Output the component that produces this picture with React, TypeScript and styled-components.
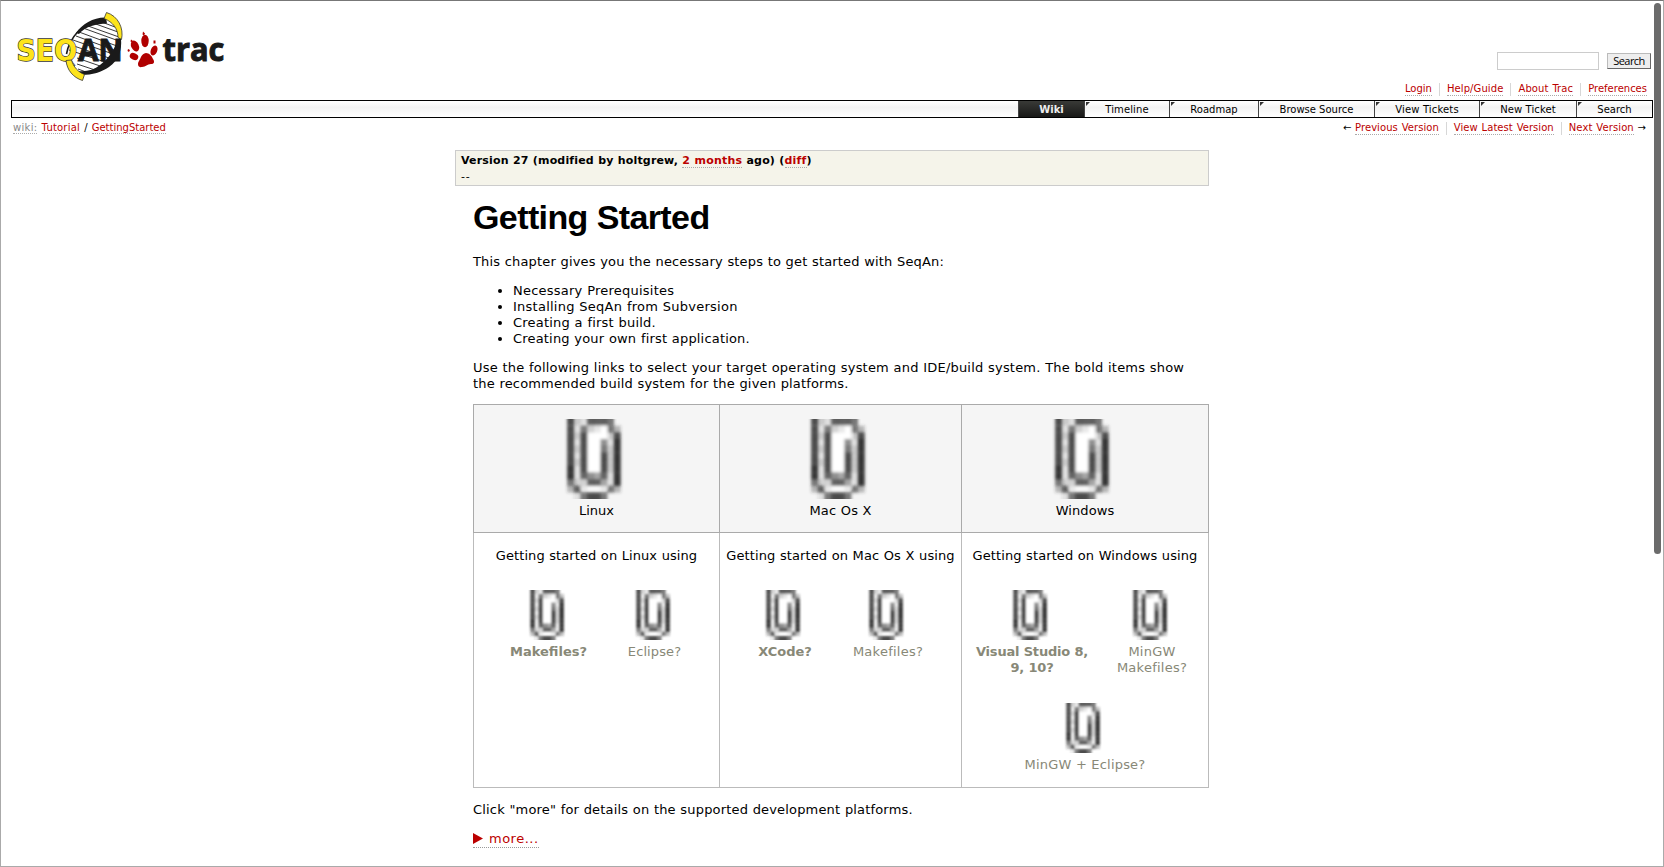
import React from 'react';
import styled, { createGlobalStyle } from 'styled-components';

const GlobalStyle = createGlobalStyle`
  * { box-sizing: border-box; }
  html, body { margin: 0; padding: 0; background: #fff; overflow: hidden; }
  body { font: 13px/16px Verdana, "DejaVu Sans", sans-serif; color: #000; }
`;

const Frame = styled.div`
  display: flex;
  justify-content: space-between;
  width: 1664px;
  height: 867px;
  border: 1px solid #aaa;
  border-top-color: #777;
  overflow: hidden;
`;
const Page = styled.div`
  display: flex;
  flex-direction: column;
  width: 1642px;
  margin-left: 10px;
`;
const ScrollTrack = styled.div`
  width: 9px;
  padding-top: 2px;
`;
const ScrollThumb = styled.div`
  width: 7px;
  height: 551px;
  border-radius: 3.5px;
  background: #6b6b6b;
`;

const Header = styled.header`
  display: flex;
  justify-content: space-between;
  height: 99px;
`;
const HeaderSide = styled.div`
  display: flex;
  flex-direction: column;
  align-items: flex-end;
  padding: 51px 2px 0 0;
`;
const SearchForm = styled.form`
  display: flex;
  align-items: center;
  gap: 8px;
  height: 18px;
`;
const SearchInput = styled.input`
  width: 102px;
  height: 18px;
  padding: 0 3px;
  border: 1px solid #ccc;
  background: #fff;
`;
const SearchButton = styled.button`
  width: 44px;
  height: 16px;
  padding: 0 0 1px;
  border: 1px solid #bbb;
  border-right-color: #666;
  border-bottom-color: #666;
  background: #eee;
  color: #000;
  font: 11px/13px "Open Sans", sans-serif;
  letter-spacing: -0.55px;
`;

const LinkBar = styled.div<{ $top?: number; $right?: number }>`
  display: flex;
  align-items: center;
  height: 12px;
  margin-top: ${(p) => p.$top ?? 0}px;
  margin-right: ${(p) => p.$right ?? 0}px;
  font-size: 10px;
  line-height: 12px;
`;
const BarItem = styled.span`
  display: flex;
  padding: 0 7px;
  white-space: pre;
  word-spacing: 0.6px;
  & + & { border-left: 1px solid #d7d7d7; }
  &:last-child { padding-right: 0; }
`;
const Link = styled.a<{ $ls?: number }>`
  color: #b00;
  border-bottom: 1px dotted #aaa;
  letter-spacing: ${(p) => p.$ls ?? 0}px;
  text-decoration: none;
`;
const Muted = styled(Link)`
  color: #888;
`;

const MainNav = styled.nav`
  display: flex;
  justify-content: flex-end;
  height: 18px;
  border: 1px solid #000;
  background: linear-gradient(#fff, #f3f3f3 40%, #fff);
  font-size: 10px;
  line-height: 18px;
`;
const Tab = styled.a<{ $w: number; $active?: boolean; $ls?: number }>`
  position: relative;
  width: ${(p) => p.$w}px;
  height: 16px;
  text-align: center;
  letter-spacing: ${(p) => p.$ls ?? 0}px;
  border-left: 1px solid #444;
  color: ${(p) => (p.$active ? '#eee' : '#000')};
  font-weight: ${(p) => (p.$active ? 700 : 400)};
  background: ${(p) => (p.$active ? 'linear-gradient(#393a37, #181817)' : 'transparent')};
  &::before {
    content: '';
    display: ${(p) => (p.$active ? 'none' : 'block')};
    position: absolute;
    left: 1px;
    top: 1px;
    border-top: 4px solid #333;
    border-right: 4px solid transparent;
  }
`;

const CrumbRow = styled.div`
  display: flex;
  justify-content: space-between;
  padding: 4px 7px 0 2px;
`;
const Crumbs = styled.div`
  font-size: 10px;
  line-height: 12px;
  white-space: pre;
  word-spacing: 1px;
`;

const Article = styled.main`
  width: 754px;
  margin: 16px 0 0 444px;
`;
const VersionBox = styled.div`
  height: 36px;
  padding: 2px 5px;
  border: 1px solid #ccc;
  background: #f5f4ea;
  font-size: 11px;
  line-height: 16px;
`;
const VersionTitle = styled.div`
  font-weight: 700;
  letter-spacing: 0.16px;
  word-spacing: 0.3px;
`;
const Content = styled.div`
  margin-left: 18px;
`;
const Title = styled.h1`
  margin: 11px 0 17px;
  font: 700 34px/40px "Liberation Sans", Arial, sans-serif;
  letter-spacing: -0.6px;
`;
const Para = styled.p<{ $mt?: number; $mb?: number }>`
  margin: ${(p) => p.$mt ?? 0}px 0 ${(p) => p.$mb ?? 13}px;
  white-space: pre;
`;
const Line = styled.span<{ $ls?: number }>`
  letter-spacing: ${(p) => p.$ls ?? 0}px;
  word-spacing: 0.3px;
`;
const List = styled.ul`
  margin: 0 0 13px;
  padding-left: 40px;
`;

const Platforms = styled.div`
  display: grid;
  grid-template-columns: 247px 242px 247px;
  grid-template-rows: 129px 255px;
  width: 736px;
`;
const HeadCell = styled.div`
  display: flex;
  flex-direction: column;
  align-items: center;
  padding-top: 14px;
  border: 1px solid #aaa;
  border-left-width: 0;
  background: #f5f5f5;
  &:first-child { border-left-width: 1px; }
`;
const BodyCell = styled.div<{ $first?: boolean }>`
  display: flex;
  flex-direction: column;
  align-items: center;
  padding-top: 15px;
  border: solid #bbb;
  border-width: 0 1px 1px ${(p) => (p.$first ? 1 : 0)}px;
`;
const HeadLabel = styled.div<{ $ls?: number }>`
  margin-top: 4px;
  letter-spacing: ${(p) => p.$ls ?? 0}px;
`;
const Choices = styled.div<{ $gap?: number; $top: number; $shift?: number }>`
  display: flex;
  justify-content: center;
  gap: ${(p) => p.$gap ?? 0}px;
  margin-top: ${(p) => p.$top}px;
  margin-left: ${(p) => p.$shift ?? 0}px;
`;
const Choice = styled.a<{ $bold?: boolean; $w: number; $ls?: number }>`
  display: flex;
  flex-direction: column;
  align-items: center;
  gap: 4px;
  width: ${(p) => p.$w}px;
  color: #887;
  font-weight: ${(p) => (p.$bold ? 700 : 400)};
  letter-spacing: ${(p) => p.$ls ?? 0}px;
  text-align: center;
  white-space: pre;
`;
const More = styled.a`
  display: inline-flex;
  align-items: flex-start;
  gap: 6px;
  height: 18px;
  margin-top: -1px;
  line-height: 18px;
  color: #b00;
  border-bottom: 1px dotted #999;
  letter-spacing: 0.5px;
`;
const MoreArrow = styled.svg`
  margin-top: 3px;
`;

/* Darkness of each pixel of the paperclip, 0 (clear) to 9 (darkest). */
const CLIP_CELLS = [
  [8, 2, 1, 7, 7, 7, 6, 0],
  [8, 1, 6, 2, 1, 0, 6, 3],
  [8, 2, 8, 0, 0, 0, 2, 8],
  [8, 1, 8, 0, 0, 5, 1, 9],
  [8, 2, 8, 0, 0, 6, 2, 9],
  [8, 1, 8, 0, 0, 8, 2, 9],
  [8, 2, 8, 0, 0, 8, 2, 9],
  [9, 1, 8, 0, 0, 8, 2, 9],
  [9, 1, 7, 5, 4, 7, 1, 9],
  [6, 2, 2, 7, 7, 4, 1, 9],
  [3, 7, 1, 0, 0, 1, 6, 3],
  [0, 1, 6, 8, 8, 6, 0, 0],
];

const ClipSvg = styled.svg`
  display: block;
  overflow: hidden;
`;

function Paperclip({ size }: { size: number }) {
  return (
    <ClipSvg width={size} height={size} viewBox="0 0 12 12">
      <defs>
        <filter id="soften" x="-10%" y="-10%" width="120%" height="120%">
          <feGaussianBlur stdDeviation="0.2" />
        </filter>
      </defs>
      <g filter="url(#soften)">
        <rect x="3.5" y="1" width="4" height="9.5" fill="#fff" />
        {CLIP_CELLS.map((row, y) =>
          row.map((v, x) =>
            v ? (
              <rect
                key={`${x}-${y}`}
                x={1.52 + x}
                y={y === 0 ? -1 : y}
                width="1.04"
                height={y === 0 || y === 11 ? 2 : 1.04}
                fill="#2a2a2a"
                fillOpacity={v / 9.6}
              />
            ) : null,
          ),
        )}
      </g>
    </ClipSvg>
  );
}

function Logo() {
  return (
    <svg width="230" height="90" viewBox="11 1 230 90">
      <path d="M105 17C85 22 70 36 66 56L77 74C98 73 118 60 121 38C118 27 112 20 105 17Z" fill="#fff" />
      <g fill="none" stroke="#222" strokeWidth="0.9">
        <path d="M99 21l16 6M93 23l25 9M88 26l31 11M83 28l36 13M79 32l38 14M76 36l38 14M73 40l40 14M71 45l38 13M69 50l36 12M77 58l26 9M77 64l18 6M78 69l8 3" />
      </g>
      <path d="M106 17.500C94 17 82 24 76 33L79 34C86 26 96 24 107 23.500Z" fill="#1a1a1a" />
      <path d="M78 31.500C72 38 68 45 66.500 54" fill="none" stroke="#1a1a1a" strokeWidth="1.600" />
      <path d="M121 39C122 50 119 60 109 67C102 72 92 75 82 75L78 71C86 72 94 70 100 65C109 58 115 50 117 39Z" fill="#1a1a1a" />
      <path d="M106.500 12.500C118 16 124 28 121.500 39.500L118 37.500C118 29 113 22 104 18.500Z" fill="#fde41b" stroke="#333" strokeWidth="0.8" />
      <text x="16.500" y="61" fontFamily="DejaVu Sans" fontWeight="700" fontSize="30" textLength="60.500" lengthAdjust="spacingAndGlyphs" fill="#fde41b" stroke="#333" strokeWidth="1.400" paintOrder="stroke">SEQ</text>
      <path d="M66 60.500C67 70 73 77.500 82.500 80.500L84.500 74.500C78 72 73.500 67 71.500 60Z" fill="#fde41b" stroke="#333" strokeWidth="0.8" />
      <text x="78" y="61.300" fontFamily="Open Sans" fontWeight="700" fontSize="31" textLength="44.500" lengthAdjust="spacingAndGlyphs" fill="#1a1a1a" stroke="#1a1a1a" strokeWidth="1">AN</text>
      <g fill="#b00000">
        <path d="M146 53C149 53 152 56 153 59C155 62 154 64 151 64C147 64 146 67 142 67C138 68 137 64 139 61C141 58 141 54 146 53Z" />
        <ellipse cx="134" cy="56.500" rx="4.400" ry="3.300" transform="rotate(22 134 56.500)" />
        <ellipse cx="135" cy="46" rx="3.800" ry="5.700" transform="rotate(-25 135 46)" />
        <ellipse cx="145" cy="41" rx="3.700" ry="6.200" />
        <ellipse cx="154" cy="50.500" rx="3.200" ry="5.200" transform="rotate(22 154 50.500)" />
        <path d="M143 31.500l2 2-1 2-1.500-1ZM131 39.500l1.500 1v2l-2-1ZM153.500 40.500h2v3h-2ZM128 49l2 1-1 2-1.500-1Z" />
      </g>
      <text x="162.500" y="61" fontFamily="Open Sans" fontWeight="700" fontSize="32.500" textLength="62" lengthAdjust="spacingAndGlyphs" fill="#1a1a1a" stroke="#1a1a1a" strokeWidth="1">trac</text>
    </svg>
  );
}

export default function App() {
  return (
    <Frame>
      <GlobalStyle />
      <Page>
        <Header>
          <Logo />
          <HeaderSide>
            <SearchForm>
              <SearchInput />
              <SearchButton type="button">Search</SearchButton>
            </SearchForm>
            <LinkBar $top={13} $right={4}>
              <BarItem><Link>Login</Link></BarItem>
              <BarItem><Link $ls={0.1}>Help/Guide</Link></BarItem>
              <BarItem><Link $ls={0.1}>About Trac</Link></BarItem>
              <BarItem><Link>Preferences</Link></BarItem>
            </LinkBar>
          </HeaderSide>
        </Header>
        <MainNav>
          <Tab $w={66} $active>Wiki</Tab>
          <Tab $w={85} $ls={0.1}>Timeline</Tab>
          <Tab $w={89}>Roadmap</Tab>
          <Tab $w={116}>Browse Source</Tab>
          <Tab $w={105} $ls={0.15}>View Tickets</Tab>
          <Tab $w={97} $ls={0.08}>New Ticket</Tab>
          <Tab $w={76}>Search</Tab>
        </MainNav>
        <CrumbRow>
          <Crumbs><Muted $ls={0.3}>wiki:</Muted> <Link $ls={0.2}>Tutorial</Link> / <Link>GettingStarted</Link></Crumbs>
          <LinkBar>
            <BarItem>{'← '}<Link $ls={0.06}>Previous Version</Link></BarItem>
            <BarItem><Link $ls={0.05}>View Latest Version</Link></BarItem>
            <BarItem><Link $ls={0.1}>Next Version</Link>{' →'}</BarItem>
          </LinkBar>
        </CrumbRow>
        <Article>
          <VersionBox>
            <VersionTitle>Version 27 (modified by holtgrew, <Link $ls={0.2}>2 months</Link> ago) (<Link $ls={0.2}>diff</Link>)</VersionTitle>
            <Line $ls={0.8}>--</Line>
          </VersionBox>
          <Content>
            <Title>Getting Started</Title>
            <Para><Line $ls={0.155}>This chapter gives you the necessary steps to get started with SeqAn:</Line></Para>
            <List>
              <li><Line $ls={0.23}>Necessary Prerequisites</Line></li>
              <li><Line $ls={0.245}>Installing SeqAn from Subversion</Line></li>
              <li><Line $ls={0.21}>Creating a first build.</Line></li>
              <li><Line $ls={0.18}>Creating your own first application.</Line></li>
            </List>
            <Para $mb={12}>
              <Line $ls={0.195}>Use the following links to select your target operating system and IDE/build system. The bold items show</Line>
              <br />
              <Line $ls={0.165}>the recommended build system for the given platforms.</Line>
            </Para>
            <Platforms>
              <HeadCell><Paperclip size={80} /><HeadLabel>Linux</HeadLabel></HeadCell>
              <HeadCell><Paperclip size={80} /><HeadLabel $ls={0.2}>Mac Os X</HeadLabel></HeadCell>
              <HeadCell><Paperclip size={80} /><HeadLabel $ls={0.1}>Windows</HeadLabel></HeadCell>
              <BodyCell $first>
                <Line $ls={0.08}>Getting started on Linux using</Line>
                <Choices $top={26} $gap={26} $shift={10}>
                  <Choice $bold $w={80}><Paperclip size={50} />Makefiles?</Choice>
                  <Choice $w={80} $ls={0.1}><Paperclip size={50} />Eclipse?</Choice>
                </Choices>
              </BodyCell>
              <BodyCell>
                <Line $ls={0.1}>Getting started on Mac Os X using</Line>
                <Choices $top={26} $gap={23} $shift={-8}>
                  <Choice $bold $w={80}><Paperclip size={50} />XCode?</Choice>
                  <Choice $w={80} $ls={0.25}><Paperclip size={50} />Makefiles?</Choice>
                </Choices>
              </BodyCell>
              <BodyCell>
                <Line $ls={0.09}>Getting started on Windows using</Line>
                <Choices $top={26} $gap={0} $shift={14}>
                  <Choice $bold $w={120} $ls={-0.18}><Paperclip size={50} />{'Visual Studio 8,\n9, 10?'}</Choice>
                  <Choice $w={120} $ls={0.25}><Paperclip size={50} />{'MinGW\nMakefiles?'}</Choice>
                </Choices>
                <Choices $top={27}>
                  <Choice $w={130} $ls={0.2}><Paperclip size={50} />MinGW + Eclipse?</Choice>
                </Choices>
              </BodyCell>
            </Platforms>
            <Para $mt={14}><Line $ls={0.17}>Click "more" for details on the supported development platforms.</Line></Para>
            <More>
              <MoreArrow width="10" height="11" viewBox="0 0 10 11"><path d="M0 0L10 5.500L0 11Z" fill="#b00" /></MoreArrow>
              more...
            </More>
          </Content>
        </Article>
      </Page>
      <ScrollTrack><ScrollThumb /></ScrollTrack>
    </Frame>
  );
}
